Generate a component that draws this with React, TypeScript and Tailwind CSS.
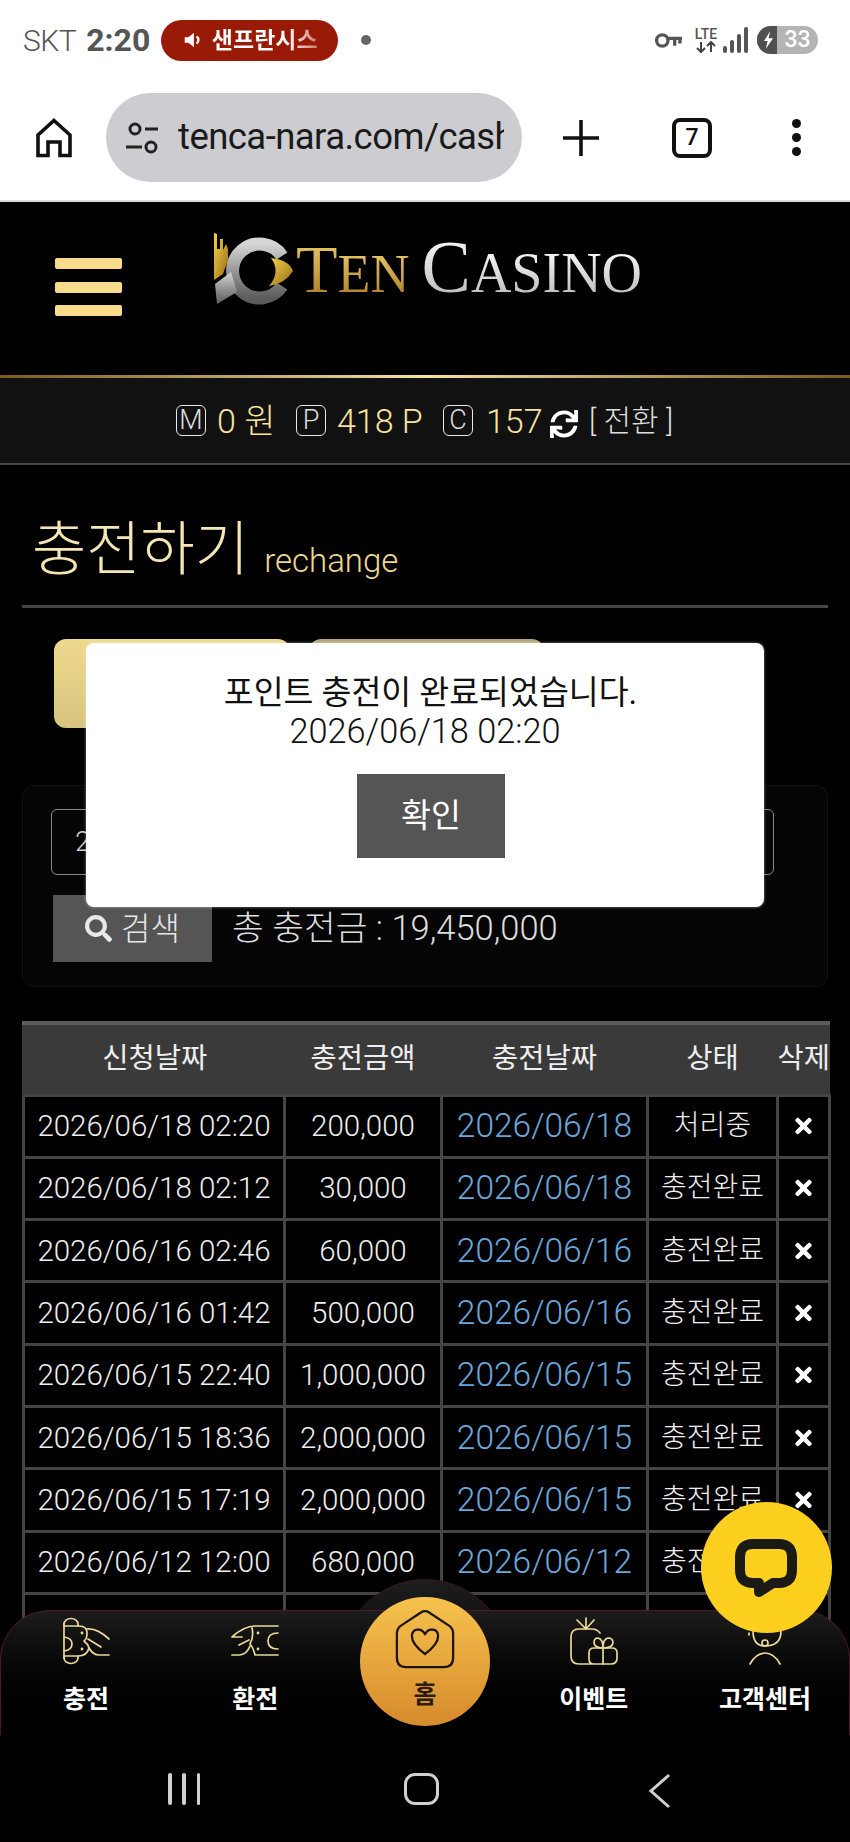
import React from "react";
import { FaSearch, FaSync, FaTimes } from "react-icons/fa";

const rows = [
  ["2026/06/18 02:20", "200,000", "2026/06/18", "처리중"],
  ["2026/06/18 02:12", "30,000", "2026/06/18", "충전완료"],
  ["2026/06/16 02:46", "60,000", "2026/06/16", "충전완료"],
  ["2026/06/16 01:42", "500,000", "2026/06/16", "충전완료"],
  ["2026/06/15 22:40", "1,000,000", "2026/06/15", "충전완료"],
  ["2026/06/15 18:36", "2,000,000", "2026/06/15", "충전완료"],
  ["2026/06/15 17:19", "2,000,000", "2026/06/15", "충전완료"],
  ["2026/06/12 12:00", "680,000", "2026/06/12", "충전완료"],
  ["2026/06/12 11:52", "300,000", "2026/06/12", "충전완료"],
];

const gold = "#ecd89a";

function Letter({ c }: { c: string }) {
  return (
    <span className="flex h-[31px] w-[30px] items-center justify-center rounded-[6px] border border-[#e8e8e8] text-[27px] font-light leading-none text-[#dddddd]">
      {c}
    </span>
  );
}

function ChargeIcon() {
  return (
    <svg viewBox="10 6 50 50" className="mt-[6px] h-[50px] w-[50px]" fill="none" stroke={gold} strokeWidth="1.7" strokeLinecap="round" strokeLinejoin="round">
      <path d="M13 15 V13 a7 5.5 0 0 1 14 0 V15 M13 45 V47 a7 5.5 0 0 0 14 0 V45" />
      <path d="M13 13 V47 M13 15 H28 Q36 15 36 22 Q36 28 33 30 Q37 33 38 37 Q36 45 27 45 H13" />
      <path d="M13 26 Q21 27 21 33 Q21 39 13 40" />
      <path d="M36 18 Q46 17 58 28 M37 28 L50 36 M38 37 Q42 44 48 44 H58" />
      <circle cx="31" cy="22" r="1.4" fill={gold} stroke="none" />
      <circle cx="31" cy="38" r="1.4" fill={gold} stroke="none" />
    </svg>
  );
}

function ExchangeIcon() {
  return (
    <svg viewBox="180 6 50 50" className="mt-[6px] h-[50px] w-[50px]" fill="none" stroke={gold} strokeWidth="1.7" strokeLinecap="round" strokeLinejoin="round">
      <path d="M228 15 H205 Q194 15 182 26 H192 M228 44 H205 Q203 36 200 33 Q204 26 202 17" />
      <path d="M189 34 L199 29 M182 44 H190 Q197 43 200 35" />
      <path d="M228 22 Q218 22 218 30 Q218 38 228 38" />
      <circle cx="208" cy="22" r="1.4" fill={gold} stroke="none" />
      <circle cx="208" cy="38" r="1.4" fill={gold} stroke="none" />
    </svg>
  );
}

function GiftIcon() {
  return (
    <svg viewBox="8 14 54 54" className="mt-[4px] h-[54px] w-[54px]" fill="none" stroke={gold} strokeWidth="1.7" strokeLinecap="round" strokeLinejoin="round">
      <path d="M18 19 L27 28 L35 19 M27 17 V28" />
      <path d="M41 32 Q38 28 33 28 H20 Q12 28 12 36 V55 Q12 63 20 63 H52 Q58 63 58 57 V52 Q58 47 53 47 H35 Q30 47 30 52 V58 Q30 63 35 63" />
      <path d="M44 47 V63 M44 47 Q36 47 35 42 Q35 37 39 37 Q44 38 44 47 Q44 38 49 37 Q54 37 54 42 Q53 47 44 47" />
    </svg>
  );
}

function AgentIcon() {
  return (
    <svg viewBox="180 24 50 44" className="mt-[14px] h-[44px] w-[50px]" fill="none" stroke={gold} strokeWidth="1.7" strokeLinecap="round" strokeLinejoin="round">
      <path d="M193 30 Q193 45 205 45 Q221 45 221 30 M189 32 V34" />
      <circle cx="205" cy="42" r="3" />
      <path d="M190 63 Q196 52 205 52 Q214 52 220 63" />
    </svg>
  );
}

function NavItem({ label, icon, width }: { label: string; icon: React.ReactNode; width: string }) {
  return (
    <div className={`flex flex-col items-center ${width}`}>
      <div className="flex h-[74px] items-start">{icon}</div>
      <span className="text-[25px] font-bold leading-[30px] text-white">{label}</span>
    </div>
  );
}

export default function App() {
  return (
    <div
      className="relative h-[1842px] w-[850px] overflow-hidden bg-black"
      style={{ fontFamily: "Roboto, 'Noto Sans CJK KR', sans-serif" }}
    >
      {/* status bar */}
      <div className="flex h-[80px] items-center bg-white pl-[23px] pr-[32px] text-[#555555]">
        <span className="text-[30px] font-light tracking-[-0.5px]">SKT</span>
        <span className="ml-[10px] text-[32px] font-bold">2:20</span>
        <div className="ml-[11px] flex h-[41px] w-[177px] items-center justify-center gap-[8px] rounded-full bg-[#9a1a08]">
          <svg viewBox="0 0 24 24" className="h-[22px] w-[22px]" fill="white">
            <path d="M3 9h4l6-5v16l-6-5H3z" />
            <path d="M16 8q4 4 0 8" fill="none" stroke="white" strokeWidth="2.5" />
          </svg>
          <span className="bg-gradient-to-r from-white from-70% to-[#c97a6e] bg-clip-text text-[23px] font-bold leading-none text-transparent">샌프란시스</span>
        </div>
        <span className="ml-[23px] h-[10px] w-[10px] rounded-full bg-[#666666]" />
        <div className="ml-auto flex items-center">
          <svg viewBox="0 0 28 16" className="h-[17px] w-[29px]" fill="none" stroke="#555555" strokeWidth="3.2">
            <circle cx="8" cy="8" r="5.5" />
            <path d="M13 6H27M20 6v7M25 6v5" />
          </svg>
          <div className="ml-[10px] flex w-[26px] flex-col items-center">
            <span className="text-[14px] font-medium leading-[14px] text-[#555555]">LTE</span>
            <svg viewBox="0 0 22 12" className="h-[12px] w-[22px]" fill="none" stroke="#444444" strokeWidth="2">
              <path d="M6 1V11M2 7l4 4 4-4M16 11V1M12 5l4-4 4 4" />
            </svg>
          </div>
          <svg viewBox="0 0 26 28" className="ml-[3px] h-[28px] w-[26px]" fill="#555555">
            <rect x="1" y="20" width="4" height="7" rx="2" />
            <rect x="8" y="14" width="4" height="13" rx="2" />
            <rect x="15" y="8" width="4" height="19" rx="2" />
            <rect x="22" y="1" width="4" height="26" rx="2" />
          </svg>
          <div className="ml-[9px] flex h-[28px] w-[61px] overflow-hidden rounded-full bg-[#b4b4b4]">
            <div className="flex w-[20px] items-center justify-center bg-[#505050] pl-[3px]">
              <svg viewBox="0 0 12 20" className="h-[18px] w-[11px]" fill="white">
                <path d="M8 0 1 11h4l-2 9 8-12H6z" />
              </svg>
            </div>
            <span className="flex-1 text-center text-[23px] font-medium leading-[28px] text-white">33</span>
          </div>
        </div>
      </div>

      {/* browser bar */}
      <div className="flex h-[122px] items-start border-b-2 border-[#dcdcdc] bg-white pt-[13px]">
        <div className="flex h-[89px] w-[106px] items-center justify-center pl-[2px]">
          <svg viewBox="0 0 36 40" className="h-[40px] w-[36px]" fill="none" stroke="#111111" strokeWidth="3.6" strokeLinejoin="miter">
            <path d="M18 2.5 34 17V37.5H24V24H12V37.5H2V17Z" />
          </svg>
        </div>
        <div className="flex h-[89px] w-[416px] items-center overflow-hidden rounded-full bg-[#cdccd0] pl-[19px]">
          <svg viewBox="0 0 34 34" className="h-[34px] w-[34px] shrink-0" fill="none" stroke="#222222" strokeWidth="3">
            <circle cx="10" cy="8" r="5" />
            <path d="M20 8H33M1 26H17" />
            <circle cx="26" cy="26" r="5" />
          </svg>
          <div className="ml-[19px] w-[326px] overflow-hidden">
            <span className="block whitespace-nowrap text-[36.5px] leading-none tracking-[-0.55px] text-[#1a1a1a]">tenca-nara.com/cash</span>
          </div>
        </div>
        <div className="flex h-[89px] flex-1 items-center pl-[41px]">
          <svg viewBox="0 0 36 36" className="h-[36px] w-[36px]" fill="none" stroke="#111111" strokeWidth="3.6">
            <path d="M18 0V36M0 18H36" />
          </svg>
          <span className="ml-[73px] flex h-[40px] w-[40px] items-center justify-center rounded-[8px] border-[4px] border-[#111111] text-[23px] font-medium leading-none text-[#111111]">7</span>
          <div className="ml-[80px] flex flex-col gap-[5px]">
            <span className="h-[9px] w-[9px] rounded-full bg-[#111111]" />
            <span className="h-[9px] w-[9px] rounded-full bg-[#111111]" />
            <span className="h-[9px] w-[9px] rounded-full bg-[#111111]" />
          </div>
        </div>
      </div>

      {/* site header */}
      <div className="flex h-[173px] bg-black">
        <div className="ml-[55px] mt-[56px] flex h-[58px] w-[67px] flex-col justify-between">
          <span className="h-[11px] rounded-[2px] bg-[#f8dc8c]" />
          <span className="h-[11px] rounded-[2px] bg-[#f8dc8c]" />
          <span className="h-[11px] rounded-[2px] bg-[#f8dc8c]" />
        </div>
        <div className="ml-[89px] mt-[28px] flex h-[72px] items-start" style={{ fontFamily: "'Liberation Serif', serif" }}>
          <svg viewBox="10 8 84 76" className="h-[76px] w-[84px] shrink-0">
            <defs>
              <linearGradient id="sv" x1="0" y1="0" x2="0" y2="1">
                <stop offset="0" stopColor="#d5d5d5" />
                <stop offset="0.6" stopColor="#8a8a8a" />
                <stop offset="1" stopColor="#5c5c5c" />
              </linearGradient>
              <linearGradient id="gd" x1="0" y1="0" x2="1" y2="1">
                <stop offset="0" stopColor="#f5d44f" />
                <stop offset="1" stopColor="#9a6a12" />
              </linearGradient>
            </defs>
            <path d="M81 34A27 27 0 1 0 81 64" fill="none" stroke="url(#sv)" strokeWidth="13" />
            <path d="M14 62 30 50 36 70 16 82Z" fill="url(#sv)" />
            <path d="M13 11 16 12V27H19V17H22V28L25 22 27 27V38L22 52 13 58Z" fill="url(#gd)" />
            <path d="M70 36Q88 38 92 49 84 62 68 64 80 50 70 36Z" fill="url(#gd)" />
          </svg>
          <span className="ml-[1px] flex items-baseline whitespace-nowrap leading-none">
            <span className="bg-gradient-to-b from-[#f0cf70] to-[#a87a20] bg-clip-text text-[68px] text-transparent">T</span>
            <span className="bg-gradient-to-b from-[#f0cf70] to-[#a87a20] bg-clip-text text-[54px] text-transparent">EN</span>
            <span className="ml-[12px] bg-gradient-to-b from-[#ffffff] to-[#b8b8b8] bg-clip-text text-[74px] text-transparent">C</span>
            <span className="bg-gradient-to-b from-[#ffffff] to-[#b8b8b8] bg-clip-text text-[56px] text-transparent">ASINO</span>
          </span>
        </div>
      </div>

      {/* balance */}
      <div className="h-[3px] bg-gradient-to-r from-[#7a5a20] via-[#f5e2a6] to-[#7a5a20]" />
      <div className="flex h-[87px] items-center border-b-2 border-[#444444] bg-[#111111] pl-[176px]">
        <Letter c="M" />
        <span className="ml-[11px] w-[79px] text-[34px] font-light leading-none text-[#f8e29c]">0 원</span>
        <Letter c="P" />
        <span className="ml-[11px] w-[106px] text-[34px] font-light leading-none text-[#f8e29c]">418 P</span>
        <Letter c="C" />
        <span className="ml-[13px] w-[64px] text-[34px] font-light leading-none text-[#f8e29c]">157</span>
        <FaSync className="mt-[6px] h-[28px] w-[28px] text-white" />
        <span className="ml-[11px] whitespace-nowrap text-[30px] font-light leading-none text-[#dddddd]">[ 전환 ]</span>
      </div>

      {/* title */}
      <div className="mx-[22px] flex h-[143px] items-end border-b-[3px] border-[#444444] pb-[22px] pl-[10px]">
        <span className="text-[59px] font-light leading-[66px] text-[#f5e6b4]">충전하기</span>
        <span className="ml-[15px] text-[33px] font-light leading-[44px] text-[#ecd892]">rechange</span>
      </div>

      {/* tabs */}
      <div className="ml-[54px] mt-[31px] flex gap-[19px]">
        <div className="h-[89px] w-[236px] rounded-[12px] bg-gradient-to-b from-[#eed98c] to-[#d8c480]" />
        <div className="h-[89px] w-[235px] rounded-[12px] bg-[#b5a77e]" />
      </div>

      {/* search */}
      <div className="mx-[22px] mt-[57px] h-[202px] rounded-[12px] border border-[#111111] bg-[#050505] px-[28px] pt-[23px]">
        <div className="flex h-[66px] w-[723px] items-center rounded-[6px] border border-[#888888] pl-[23px] text-[28px] font-light text-[#cccccc]">
          2026/06/18
        </div>
        <div className="ml-[2px] mt-[20px] flex items-center">
          <div className="flex h-[67px] w-[159px] items-center justify-center gap-[9px] bg-[#555555] text-[#e8e8e8]">
            <FaSearch className="h-[27px] w-[27px]" />
            <span className="text-[32px] font-light leading-none">검색</span>
          </div>
          <span className="ml-[20px] text-[34.5px] font-light leading-none text-[#dddddd]">총 충전금 : 19,450,000</span>
        </div>
      </div>

      {/* table */}
      <table className="ml-[22px] mt-[34px] w-[806px] table-fixed border-collapse">
        <colgroup>
          <col className="w-[261px]" />
          <col className="w-[157px]" />
          <col className="w-[206px]" />
          <col className="w-[130px]" />
          <col className="w-[52px]" />
        </colgroup>
        <thead>
          <tr className="h-[72px] border-t-[4px] border-[#5c5c5c] bg-[#3a3a3a] text-[28.5px] text-[#eeeeee]">
            <th className="border-l-[3px] border-l-[#3a3a3a] font-normal">신청날짜</th>
            <th className="font-normal">충전금액</th>
            <th className="font-normal">충전날짜</th>
            <th className="font-normal">상태</th>
            <th className="whitespace-nowrap font-normal">삭제</th>
          </tr>
        </thead>
        <tbody>
          {rows.map((r, i) => (
            <tr key={i} className="h-[62.3px] text-center text-[29.5px] font-light text-[#eeeeee]">
              <td className="border-[3px] border-[#444444] whitespace-nowrap">{r[0]}</td>
              <td className="border-[3px] border-[#444444] whitespace-nowrap">{r[1]}</td>
              <td className="border-[3px] border-[#444444] whitespace-nowrap text-[33.5px] text-[#6aa7da]">{r[2]}</td>
              <td className="border-[3px] border-[#444444] whitespace-nowrap text-[28px]">{r[3]}</td>
              <td className="border-[3px] border-[#444444]">
                <FaTimes className="mx-auto h-[24px] w-[19px] text-white" />
              </td>
            </tr>
          ))}
        </tbody>
      </table>

      {/* bottom nav */}
      <div className="absolute bottom-0 left-0 right-0 z-10">
        <div className="relative">
          <div className="absolute left-[341px] top-[-31px] h-[60px] w-[168px] overflow-hidden">
            <div className="h-[168px] w-[168px] rounded-full border border-[#3a1522] bg-gradient-to-b from-[#1e1e1e] to-black" />
          </div>
          <div className="relative flex h-[125px] justify-between rounded-t-[50px] border-x border-t border-[#4a1a2a] bg-gradient-to-b from-[#1c1c1c] to-black pl-[10px] pr-[9px]">
            <NavItem label="충전" width="w-[150px]" icon={<ChargeIcon />} />
            <NavItem label="환전" width="w-[160px] ml-[-7px]" icon={<ExchangeIcon />} />
            <div className="w-[120px]" />
            <NavItem label="이벤트" width="w-[150px] ml-[21px]" icon={<GiftIcon />} />
            <NavItem label="고객센터" width="w-[150px]" icon={<AgentIcon />} />
          </div>
          <div className="absolute left-[360px] top-[-13px] flex h-[129px] w-[130px] flex-col items-center rounded-full bg-gradient-to-b from-[#f6c34e] to-[#d68a2c] pt-[12px]">
            <svg viewBox="0 0 64 64" className="h-[60px] w-[60px]" fill="none" stroke="#1c1408" strokeWidth="2.4" strokeLinejoin="round">
              <path d="M28 3.5Q32 1 36 3.5L58 18Q62 21 62 26V52Q62 62 52 62H12Q2 62 2 52V26Q2 21 6 18Z" />
              <path d="M32 48C24 42 18 36 18 29 18 21 28 19 32 27 36 19 46 21 46 29 46 36 40 42 32 48Z" />
            </svg>
            <span className="mt-[11px] text-[25px] font-bold leading-[30px] text-[#2a1c08]">홈</span>
          </div>
        </div>
        {/* android nav */}
        <div className="flex h-[107px] items-start bg-black pt-[38px]">
          <div className="ml-[168px] flex h-[32px] w-[32px] justify-between">
            <span className="w-[3.5px] rounded-full bg-[#d0d0d0]" />
            <span className="w-[3.5px] rounded-full bg-[#d0d0d0]" />
            <span className="w-[3.5px] rounded-full bg-[#d0d0d0]" />
          </div>
          <span className="ml-[204px] h-[32px] w-[35px] rounded-[11px] border-[3.5px] border-[#d0d0d0]" />
          <svg viewBox="0 0 24 36" className="ml-[209px] h-[36px] w-[24px]" fill="none" stroke="#d0d0d0" strokeWidth="3">
            <path d="M21 2 3 18 21 34" />
          </svg>
        </div>
      </div>

      {/* kakao chat */}
      <div className="absolute left-[701px] top-[1502px] z-20 h-[131px] w-[131px] rounded-full bg-[#fdd01f]">
        <svg viewBox="0 0 131 131" className="h-full w-full" fill="none" stroke="#1c1a14" strokeWidth="10" strokeLinejoin="round">
          <path d="M52 42H78Q91 42 91 55V68Q91 81 78 81H72L58 90V81H52Q39 81 39 68V55Q39 42 52 42Z" />
        </svg>
      </div>

      {/* modal */}
      <div className="absolute left-[86px] top-[643px] z-30 flex h-[264px] w-[678px] flex-col items-center rounded-[8px] bg-white pt-[31px] shadow-[0_0_3px_rgba(255,255,255,0.5)]">
        <span className="ml-[11px] text-[32.5px] leading-[38px] text-[#111111]">포인트 충전이 완료되었습니다.</span>
        <span className="text-[34.3px] font-light leading-[38px] text-[#111111]">2026/06/18 02:20</span>
        <div className="ml-[12px] mt-[24px] flex h-[84px] w-[148px] items-center justify-center bg-[#555555] text-[32.5px] text-white">확인</div>
      </div>
    </div>
  );
}
